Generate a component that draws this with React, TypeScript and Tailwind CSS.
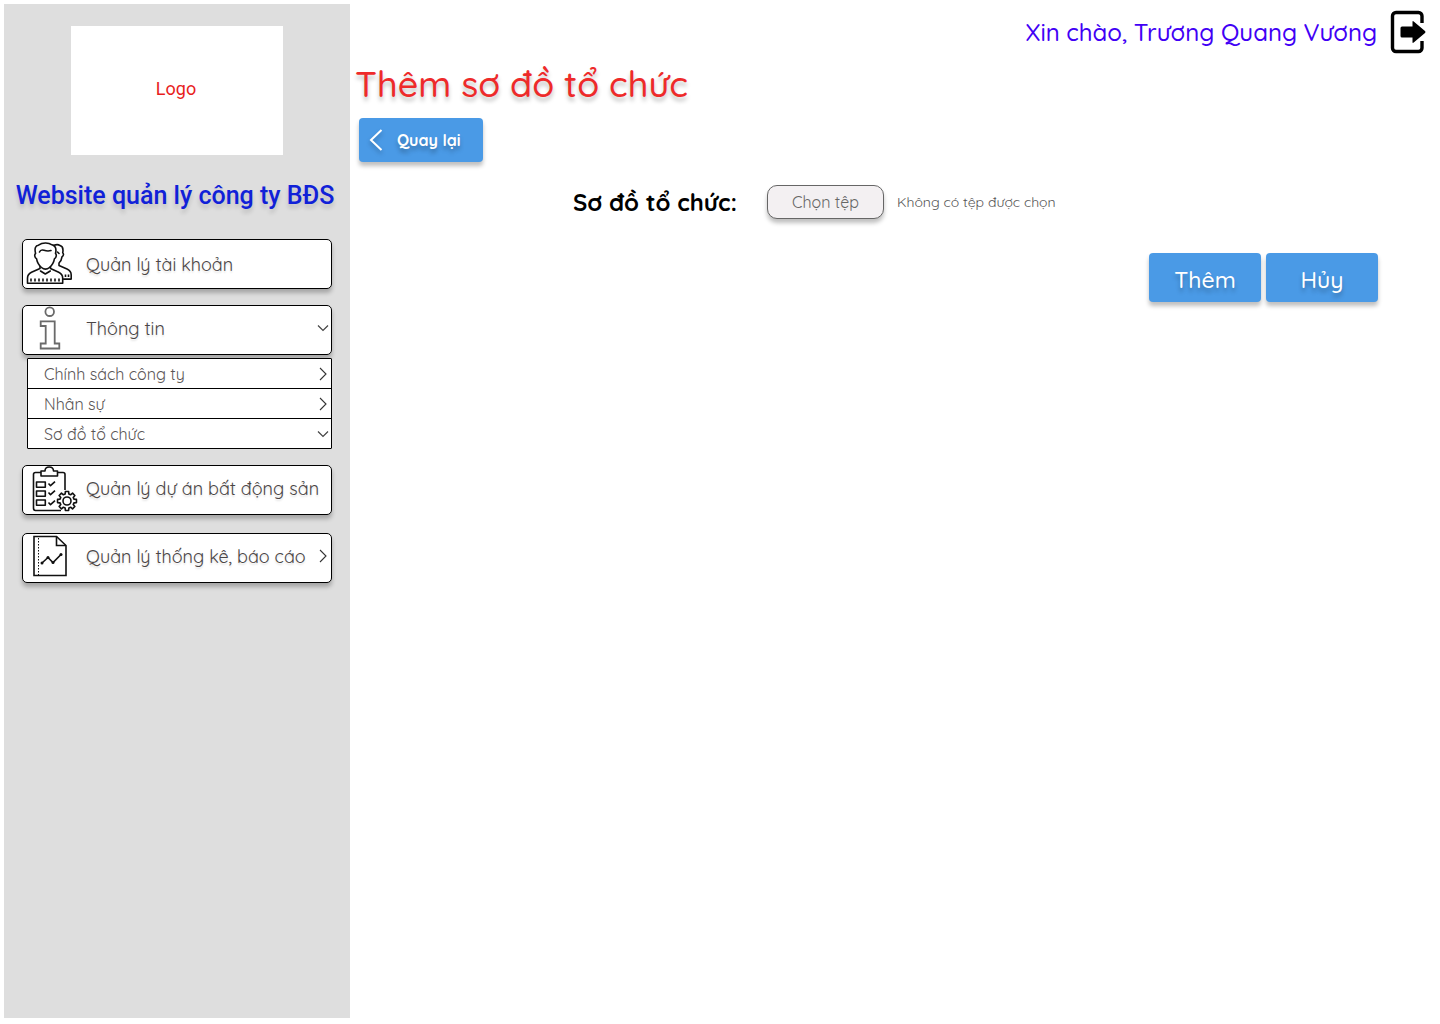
import { useState, type ReactNode } from "react";

function ChevronDown() {
  return (
    <svg viewBox="0 0 14 14" className="h-3.5 w-3.5 shrink-0" fill="none" stroke="#444" strokeWidth="1.2" aria-hidden="true">
      <path d="M2 4.5 7 9.5 12 4.5" />
    </svg>
  );
}

function ChevronRight() {
  return (
    <svg viewBox="0 0 14 14" className="h-3.5 w-3.5 shrink-0" fill="none" stroke="#333" strokeWidth="1.1" aria-hidden="true">
      <path d="M4 1 10 7 4 13" />
    </svg>
  );
}

function UsersIcon() {
  return (
    <svg viewBox="0 0 48 48" className="h-12 w-12 shrink-0" fill="none" stroke="#111" strokeWidth="1.6" strokeLinejoin="round" strokeLinecap="round" aria-hidden="true">
      <path d="M9.600 13.500C8.200 8 9.600 5.600 12.500 5.200c4-2.900 10-2.800 13.500-.4 3.600 1 4.700 3.800 3.500 8.700 1.300.8.900 4.500-1 5.200-.8 4.300-2.500 6.800-5 8.800-2.600 2.200-5.400 2.200-8 0-2.500-2-4.200-4.500-5-8.800-1.900-.7-2.300-4.400-.9-5.200Z" />
      <path d="M13.500 12c.8-2 2.300-2.400 4.500-1.700 2.600.8 4.800.9 7 .2" />
      <path d="M14 26.500v2L5.500 32.200C2.700 33.500 1.500 35.200 1.500 38.200v5h35.200v-5c0-3-1.200-4.700-4-6L24.500 28.500v-2M14.500 31l4.800 3 5-3" />
      <path d="M28 5.300c2-.8 4.500-.9 6 .3 2.800.8 3.500 3.200 2.700 7.200 1.300.9.800 3.500-.7 4-.4 3-1.400 4.800-3 6.200v2.600l8 3.500c2.900 1.300 4.200 3 4.200 6v4H37.500M31.500 12l1.500 1.500" />
      <path d="M5 38.500v3M9 38.500v3M13 38.500v3M17 38.500v3M21 38.500v3M25 38.500v3M29 38.500v3M33 38.500v3M39.500 34.500v2.500M42.500 34.500v2.500" strokeLinecap="butt" />
    </svg>
  );
}

function InfoIcon() {
  return (
    <svg viewBox="0 0 48 48" className="h-12 w-12 shrink-0" fill="none" stroke="#6a6a6a" strokeWidth="1.8" aria-hidden="true">
      <circle cx="23.700" cy="5.700" r="4.300" />
      <path d="M14.700 15.300h14v22.200h4.600v5H14.700v-5h5V20h-5Z" />
    </svg>
  );
}

const gearPoints = Array.from({ length: 8 }, (_, tooth) =>
  [
    [-0.26, 7.2],
    [-0.17, 9.6],
    [0.17, 9.6],
    [0.26, 7.2],
  ].map(([offset, radius]) => {
    const angle = (tooth * Math.PI) / 4 + offset;
    return `${(41 + radius * Math.cos(angle)).toFixed(2)},${(35 + radius * Math.sin(angle)).toFixed(2)}`;
  }),
)
  .flat()
  .join(" ");

function ProjectIcon() {
  return (
    <svg viewBox="0 0 48 48" className="h-12 w-12 shrink-0 overflow-visible" fill="none" stroke="#111" strokeWidth="1.6" strokeLinejoin="round" aria-hidden="true">
      <path d="M15 6.500H9.500Q7.500 6.500 7.500 8.500v33.500Q7.500 44.500 9.500 44.500H35M31.500 6.500h5.500Q39 6.500 39 8.500V24" />
      <path d="M15 5h4Q19 1 23.200 1T27.500 5h4v5H15Z" />
      <path d="M10.500 16h8.800v5.300h-8.800ZM10.500 25h8.800v5.300h-8.800ZM10.500 34h8.800v5.300h-8.800Z" />
      <path d="m22.500 17.500 2 2.200 4.500-4M22.500 26.500l2 2.200 4.500-4M22.500 36.500l2 2.200 4.500-4" />
      <polygon points={gearPoints} />
      <circle cx="41" cy="35" r="4" />
    </svg>
  );
}

function ReportIcon() {
  return (
    <svg viewBox="0 0 48 48" className="h-12 w-12 shrink-0" fill="none" stroke="#111" strokeWidth="1.6" aria-hidden="true">
      <path d="M8 2.500h22.500l9.500 9V41.500H8Z" />
      <path d="M30.500 2.500v9H40" />
      <path d="M12.500 4v37" strokeWidth="1" strokeDasharray="1.5 1.5" />
      <path d="m16 29 6-5.500 5 5 8-8" />
      <g fill="#111" stroke="none">
        <circle cx="16" cy="29" r="1.500" />
        <circle cx="22" cy="23.500" r="1.500" />
        <circle cx="27" cy="28.500" r="1.500" />
        <circle cx="35" cy="20.500" r="1.500" />
      </g>
    </svg>
  );
}

function LogoutIcon() {
  return (
    <svg viewBox="0 0 36 44" className="h-11 w-9" aria-hidden="true">
      <path d="M32 13V6a3.500 3.500 0 0 0-3.500-3.500H6A3.500 3.500 0 0 0 2.500 6v32A3.500 3.500 0 0 0 6 41.500h22.500a3.500 3.500 0 0 0 3.500-3.500V31" fill="none" stroke="#000" strokeWidth="3.400" />
      <path d="M12 16.500h10.500v-4.500q0-1.500 1.200-.500L35 21q1 1 0 2L23.700 32.500q-1.200 1-1.200-.500v-4.500H12q-1.500 0-1.500-1.500v-8q0-1.500 1.500-1.500Z" fill="#000" />
    </svg>
  );
}

function MenuButton({ icon, label, raised = true, children }: { icon: ReactNode; label: string; raised?: boolean; children?: ReactNode }) {
  return (
    <button
      type="button"
      className="flex h-[50px] w-full items-center rounded-[5px] border border-black bg-white pl-[3px] pr-px text-left text-[18px] text-[#4a4545] shadow-[0_4px_4px_rgba(0,0,0,0.25)] [text-shadow:0_2px_2px_rgba(0,0,0,0.12)]"
    >
      {icon}
      <span className={raised ? "flex grow items-center pb-1 pl-3" : "flex grow items-center pl-3"}>
        <span className="grow whitespace-nowrap">{label}</span>
        {children}
      </span>
    </button>
  );
}

const subItems = [
  { label: "Chính sách công ty", open: false },
  { label: "Nhân sự", open: false },
  { label: "Sơ đồ tổ chức", open: true },
];

function Sidebar() {
  return (
    <aside className="mt-1 mb-1.5 ml-1 w-[346px] shrink-0 bg-[#dedede] px-[18px] pt-[22px]">
      <div className="mx-auto flex h-[129px] w-[212px] items-center justify-center bg-white pr-0.5 pb-1 font-[Roboto,sans-serif] text-[18px] text-[#e81e1e]">
        Logo
      </div>
      <p className="-mx-4 mt-[25px] pr-1 text-center font-[Roboto,sans-serif] text-[25px] leading-8 font-medium whitespace-nowrap text-[#1021d8] [text-shadow:0_4px_4px_rgba(0,0,0,0.15)]">
        Website quản lý công ty BĐS
      </p>
      <nav className="mt-[27px] flex flex-col">
        <MenuButton icon={<UsersIcon />} label="Quản lý tài khoản" raised={false} />
        <div className="mt-4">
          <MenuButton icon={<InfoIcon />} label="Thông tin">
            <ChevronDown />
          </MenuButton>
          <ul className="relative mt-[3px] ml-[5px] rounded-[1px] border border-black">
            {subItems.map((item) => (
              <li key={item.label} className="border-black not-last:border-b">
                <a href="#" className="flex h-[29px] items-center bg-white pr-px pl-4 text-[16px] text-[#5a5555]">
                  <span className="grow">{item.label}</span>
                  {item.open ? <ChevronDown /> : <ChevronRight />}
                </a>
              </li>
            ))}
          </ul>
        </div>
        <div className="mt-4">
          <MenuButton icon={<ProjectIcon />} label="Quản lý dự án bất động sản" />
        </div>
        <div className="mt-[18px]">
          <MenuButton icon={<ReportIcon />} label="Quản lý thống kê, báo cáo">
            <ChevronRight />
          </MenuButton>
        </div>
      </nav>
    </aside>
  );
}

function ActionButton({ label }: { label: string }) {
  return (
    <button
      type="button"
      className="h-[49px] w-28 rounded-[4px] bg-[#4a9ae6] pt-1.5 text-[23px] font-medium text-white shadow-[0_4px_4px_rgba(0,0,0,0.25)] [text-shadow:0_4px_4px_rgba(0,0,0,0.25)]"
    >
      {label}
    </button>
  );
}

export default function App() {
  const [fileName, setFileName] = useState("");
  return (
    <div className="flex min-h-screen bg-white font-[Quicksand,Lato,sans-serif]">
      <Sidebar />
      <main className="min-w-0 grow">
        <header className="flex items-center justify-end gap-[13px] pt-2.5 pr-[14px]">
          <p className="text-[24px] leading-11 font-medium text-[#4100f5]">Xin chào, Trương Quang Vương</p>
          <button type="button" aria-label="Đăng xuất">
            <LogoutIcon />
          </button>
        </header>
        <h1 className="mt-1.5 ml-[5px] text-[36px] leading-12 font-medium text-[#ee2a2a] [text-shadow:0_4px_4px_rgba(0,0,0,0.25)]">
          Thêm sơ đồ tổ chức
        </h1>
        <button
          type="button"
          className="mt-2.5 ml-[9px] flex h-11 w-[124px] items-center rounded-[4px] bg-[#4a9ae6] pl-2.5 text-[16px] font-bold text-white shadow-[0_4px_4px_rgba(0,0,0,0.25)] [text-shadow:0_4px_4px_rgba(0,0,0,0.25)]"
        >
          <svg viewBox="0 0 14 24" className="mr-3.5 h-6 w-3.5 drop-shadow-[0_3px_2px_rgba(0,0,0,0.25)]" fill="none" stroke="#fff" strokeWidth="2" aria-hidden="true">
            <path d="M12.500 2 2 12 12.500 22" />
          </svg>
          Quay lại
        </button>
        <form onSubmit={(e) => e.preventDefault()} className="mt-[23px] pr-[62px] pl-[223px]">
          <div className="flex items-center">
            <span className="w-[194px] text-[24px] leading-8 font-bold text-black">Sơ đồ tổ chức:</span>
            <input
              id="chart-file"
              type="file"
              aria-label="Sơ đồ tổ chức"
              className="sr-only"
              onChange={(e) => setFileName(e.target.files?.[0]?.name ?? "")}
            />
            <label
              htmlFor="chart-file"
              className="flex h-[34px] w-[117px] cursor-pointer items-center justify-center rounded-[10px] border border-[#666] bg-[#f3f0f2] text-[16px] text-[#666] shadow-[0_4px_4px_rgba(0,0,0,0.25)]"
            >
              Chọn tệp
            </label>
            <span className="ml-[13px] text-[14px] text-[#555]">{fileName || "Không có tệp được chọn"}</span>
          </div>
          <div className="mt-[34px] flex justify-end gap-[5px]">
            <ActionButton label="Thêm" />
            <ActionButton label="Hủy" />
          </div>
        </form>
      </main>
    </div>
  );
}
